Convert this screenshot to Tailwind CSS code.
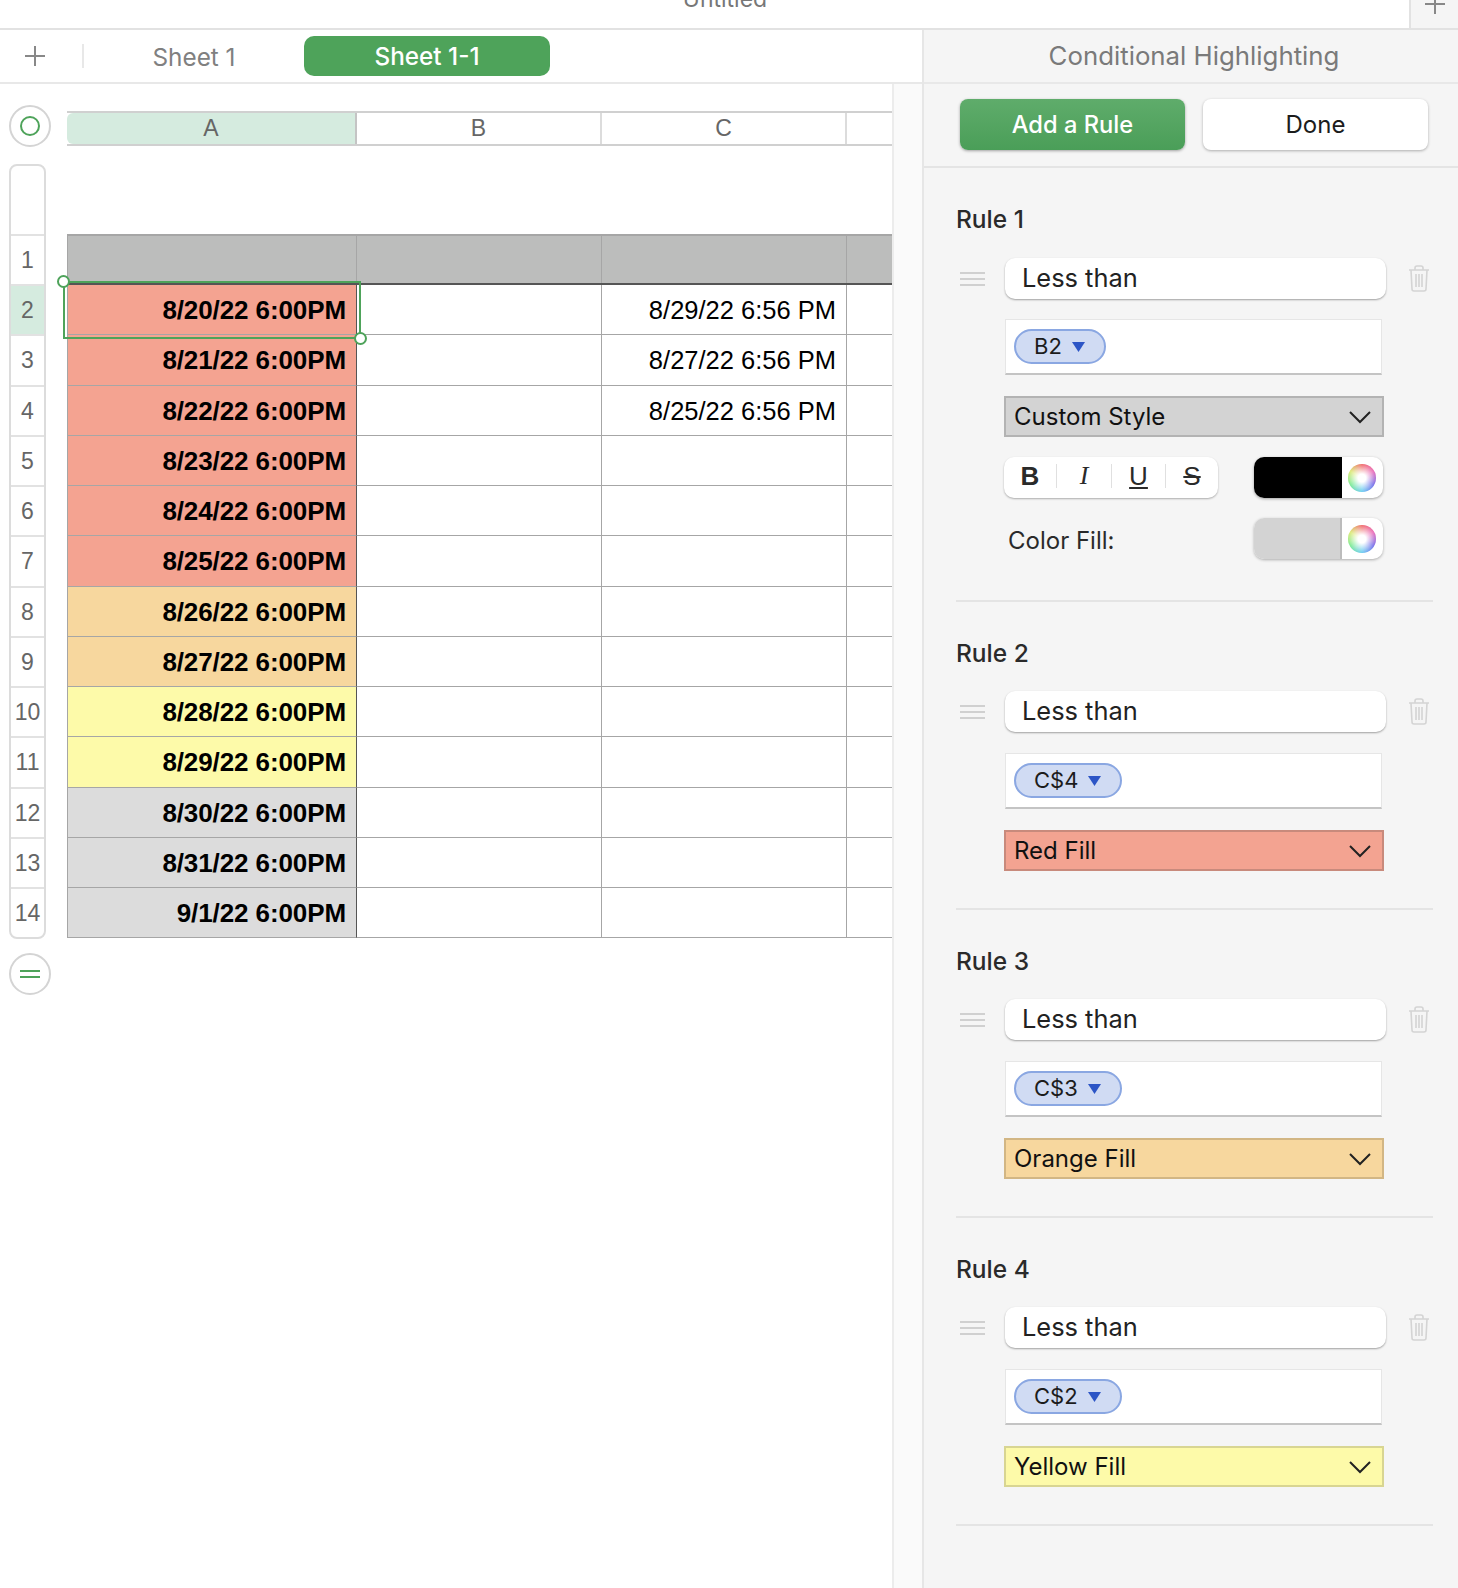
<!DOCTYPE html>
<html lang="en">
<head>
  <meta charset="UTF-8" />
  <title>Conditional Highlighting</title>
  <script src="https://cdn.jsdelivr.net/npm/@tailwindcss/browser@4"></script>
</head>
<body class="w-[1458px] h-[1588px] overflow-hidden bg-white font-['Inter',sans-serif] text-[#222]">
  <!-- Title bar -->
  <header class="flex h-[30px] border-b-2 border-[#e2e2e2] overflow-hidden">
    <div class="flex-1 flex justify-center items-end pl-[41px] pb-[15px] text-[23px] leading-[28px] text-[#777]">Untitled</div>
    <div class="w-[49px] bg-[#f5f5f5] border-l-2 border-[#e2e2e2] flex justify-center items-end pb-[14px]">
      <svg width="20" height="20" viewBox="0 0 20 20" class="text-[#888]"><path d="M10 0v20M0 10h20" stroke="currentColor" stroke-width="2"/></svg>
    </div>
  </header>

  <div class="flex h-[1558px]">
    <div class="w-[922px] flex flex-col">
      <!-- Sheet tabs -->
      <div class="h-[54px] shrink-0 border-b-2 border-[#e8e8e8] flex items-center">
        <div class="w-[69px] flex justify-center">
          <svg width="20" height="20" viewBox="0 0 20 20" class="text-[#888]"><path d="M10 0v20M0 10h20" stroke="currentColor" stroke-width="2"/></svg>
        </div>
        <div class="ml-[13px] w-[2px] h-[24px] bg-[#e8e8e8]"></div>
        <div class="w-[220px] pt-[2px] text-center text-[24.3px] text-[#808080]">Sheet 1</div>
        <div class="w-[246px] h-[40px] rounded-[10px] bg-[#4ea35a] text-white text-[24.3px] font-medium flex items-center justify-center">Sheet 1-1</div>
      </div>

      <div class="flex flex-1 min-h-0">
        <!-- Sheet canvas -->
        <div class="w-[892px] overflow-hidden pl-[9px]">
          <div class="flex items-start gap-[16px]">
            <div class="mt-[21px] w-[42px] h-[42px] rounded-full border-2 border-[#d4d4d4] bg-white flex items-center justify-center shrink-0">
              <div class="w-[20px] h-[20px] rounded-full border-2 border-[#4ea35a]"></div>
            </div>
            <div class="mt-[27px] h-[35px] flex border-y-2 border-y-[#d0d0d0] text-[23px] leading-[31px] text-[#666] font-['Liberation_Sans',sans-serif] shrink-0">
              <div class="w-[290px] text-center bg-[#d5ebdf] rounded-l-md border-r-2 border-[#c4c4c4]">A</div>
              <div class="w-[245px] text-center border-r-2 border-[#dcdcdc]">B</div>
              <div class="w-[245px] text-center border-r-2 border-[#dcdcdc]">C</div>
              <div class="w-[45px]"></div>
            </div>
          </div>

          <div class="flex mt-[17px]">
            <!-- Row numbers -->
            <div class="w-[37px] border-2 border-[#dcdcdc] rounded-lg overflow-hidden text-[23px] leading-[48px] text-center text-[#666] font-['Liberation_Sans',sans-serif] self-start shrink-0">
              <div class="h-[68px]"></div>
              <div class="h-[50px] border-t-2 border-[#e2e2e2]">1</div>
              <div class="h-[50.27px] border-t-2 border-[#e2e2e2] bg-[#d5ebdf]">2</div>
              <div class="h-[50.27px] border-t-2 border-[#e2e2e2]">3</div>
              <div class="h-[50.27px] border-t-2 border-[#e2e2e2]">4</div>
              <div class="h-[50.27px] border-t-2 border-[#e2e2e2]">5</div>
              <div class="h-[50.27px] border-t-2 border-[#e2e2e2]">6</div>
              <div class="h-[50.27px] border-t-2 border-[#e2e2e2]">7</div>
              <div class="h-[50.27px] border-t-2 border-[#e2e2e2]">8</div>
              <div class="h-[50.27px] border-t-2 border-[#e2e2e2]">9</div>
              <div class="h-[50.27px] border-t-2 border-[#e2e2e2]">10</div>
              <div class="h-[50.27px] border-t-2 border-[#e2e2e2]">11</div>
              <div class="h-[50.27px] border-t-2 border-[#e2e2e2]">12</div>
              <div class="h-[50.27px] border-t-2 border-[#e2e2e2]">13</div>
              <div class="h-[50.27px] border-t-2 border-[#e2e2e2]">14</div>
            </div>

            <!-- Table -->
            <div class="relative mt-[70px] ml-[21px] w-[825px] shrink-0 font-['Liberation_Sans',sans-serif] text-black">
              <div class="flex h-[51px] bg-[#bcbdbc] border-t-2 border-[#a6a6a6] border-b-2 border-b-[#555]">
                <div class="w-[290px] border-x border-[#a6a6a6]"></div>
                <div class="w-[245px] border-r border-[#a6a6a6]"></div>
                <div class="w-[245px] border-r border-[#a6a6a6]"></div>
              </div>
              <div class="grid grid-cols-[290px_245px_245px_45px] auto-rows-[50.27px] text-[25.5px] leading-[50px]">
                <div class="bg-[#f4a391] border-x border-r-[#555] border-l-[#a6a6a6] border-b border-b-[#a6a6a6] text-right pr-[10px] text-[26px] font-bold tracking-[-0.1px]">8/20/22 6:00PM</div>
                <div class="border-r border-b border-[#a6a6a6]"></div>
                <div class="border-r border-b border-[#a6a6a6] text-right pr-[10px]">8/29/22 6:56 PM</div>
                <div class="border-b border-[#a6a6a6]"></div>
                <div class="bg-[#f4a391] border-x border-r-[#555] border-l-[#a6a6a6] border-b border-b-[#a6a6a6] text-right pr-[10px] text-[26px] font-bold tracking-[-0.1px]">8/21/22 6:00PM</div>
                <div class="border-r border-b border-[#a6a6a6]"></div>
                <div class="border-r border-b border-[#a6a6a6] text-right pr-[10px]">8/27/22 6:56 PM</div>
                <div class="border-b border-[#a6a6a6]"></div>
                <div class="bg-[#f4a391] border-x border-r-[#555] border-l-[#a6a6a6] border-b border-b-[#a6a6a6] text-right pr-[10px] text-[26px] font-bold tracking-[-0.1px]">8/22/22 6:00PM</div>
                <div class="border-r border-b border-[#a6a6a6]"></div>
                <div class="border-r border-b border-[#a6a6a6] text-right pr-[10px]">8/25/22 6:56 PM</div>
                <div class="border-b border-[#a6a6a6]"></div>
                <div class="bg-[#f4a391] border-x border-r-[#555] border-l-[#a6a6a6] border-b border-b-[#a6a6a6] text-right pr-[10px] text-[26px] font-bold tracking-[-0.1px]">8/23/22 6:00PM</div>
                <div class="border-r border-b border-[#a6a6a6]"></div>
                <div class="border-r border-b border-[#a6a6a6]"></div>
                <div class="border-b border-[#a6a6a6]"></div>
                <div class="bg-[#f4a391] border-x border-r-[#555] border-l-[#a6a6a6] border-b border-b-[#a6a6a6] text-right pr-[10px] text-[26px] font-bold tracking-[-0.1px]">8/24/22 6:00PM</div>
                <div class="border-r border-b border-[#a6a6a6]"></div>
                <div class="border-r border-b border-[#a6a6a6]"></div>
                <div class="border-b border-[#a6a6a6]"></div>
                <div class="bg-[#f4a391] border-x border-r-[#555] border-l-[#a6a6a6] border-b border-b-[#a6a6a6] text-right pr-[10px] text-[26px] font-bold tracking-[-0.1px]">8/25/22 6:00PM</div>
                <div class="border-r border-b border-[#a6a6a6]"></div>
                <div class="border-r border-b border-[#a6a6a6]"></div>
                <div class="border-b border-[#a6a6a6]"></div>
                <div class="bg-[#f7d79e] border-x border-r-[#555] border-l-[#a6a6a6] border-b border-b-[#a6a6a6] text-right pr-[10px] text-[26px] font-bold tracking-[-0.1px]">8/26/22 6:00PM</div>
                <div class="border-r border-b border-[#a6a6a6]"></div>
                <div class="border-r border-b border-[#a6a6a6]"></div>
                <div class="border-b border-[#a6a6a6]"></div>
                <div class="bg-[#f7d79e] border-x border-r-[#555] border-l-[#a6a6a6] border-b border-b-[#a6a6a6] text-right pr-[10px] text-[26px] font-bold tracking-[-0.1px]">8/27/22 6:00PM</div>
                <div class="border-r border-b border-[#a6a6a6]"></div>
                <div class="border-r border-b border-[#a6a6a6]"></div>
                <div class="border-b border-[#a6a6a6]"></div>
                <div class="bg-[#fdfaa9] border-x border-r-[#555] border-l-[#a6a6a6] border-b border-b-[#a6a6a6] text-right pr-[10px] text-[26px] font-bold tracking-[-0.1px]">8/28/22 6:00PM</div>
                <div class="border-r border-b border-[#a6a6a6]"></div>
                <div class="border-r border-b border-[#a6a6a6]"></div>
                <div class="border-b border-[#a6a6a6]"></div>
                <div class="bg-[#fdfaa9] border-x border-r-[#555] border-l-[#a6a6a6] border-b border-b-[#a6a6a6] text-right pr-[10px] text-[26px] font-bold tracking-[-0.1px]">8/29/22 6:00PM</div>
                <div class="border-r border-b border-[#a6a6a6]"></div>
                <div class="border-r border-b border-[#a6a6a6]"></div>
                <div class="border-b border-[#a6a6a6]"></div>
                <div class="bg-[#dcdcdc] border-x border-r-[#555] border-l-[#a6a6a6] border-b border-b-[#a6a6a6] text-right pr-[10px] text-[26px] font-bold tracking-[-0.1px]">8/30/22 6:00PM</div>
                <div class="border-r border-b border-[#a6a6a6]"></div>
                <div class="border-r border-b border-[#a6a6a6]"></div>
                <div class="border-b border-[#a6a6a6]"></div>
                <div class="bg-[#dcdcdc] border-x border-r-[#555] border-l-[#a6a6a6] border-b border-b-[#a6a6a6] text-right pr-[10px] text-[26px] font-bold tracking-[-0.1px]">8/31/22 6:00PM</div>
                <div class="border-r border-b border-[#a6a6a6]"></div>
                <div class="border-r border-b border-[#a6a6a6]"></div>
                <div class="border-b border-[#a6a6a6]"></div>
                <div class="bg-[#dcdcdc] border-x border-r-[#555] border-l-[#a6a6a6] border-b border-b-[#a6a6a6] text-right pr-[10px] text-[26px] font-bold tracking-[-0.1px]">9/1/22 6:00PM</div>
                <div class="border-r border-b border-[#a6a6a6]"></div>
                <div class="border-r border-b border-[#a6a6a6]"></div>
                <div class="border-b border-[#a6a6a6]"></div>
              </div>
              <!-- Selection around A2 -->
              <div class="absolute left-[-4px] top-[47px] w-[298px] h-[58px] border-2 border-[#4ea35a]">
                <div class="absolute left-[-8px] top-[-8px] w-[13px] h-[13px] rounded-full bg-white border-2 border-[#4ea35a]"></div>
                <div class="absolute right-[-8px] bottom-[-8px] w-[13px] h-[13px] rounded-full bg-white border-2 border-[#4ea35a]"></div>
              </div>
            </div>
          </div>

          <div class="mt-[14px] w-[42px] h-[42px] rounded-full border-2 border-[#d4d4d4] bg-white flex flex-col items-center justify-center gap-[4px]">
            <div class="w-[20px] h-[2px] bg-[#4ea35a]"></div>
            <div class="w-[20px] h-[2px] bg-[#4ea35a]"></div>
          </div>
        </div>
        <div class="w-[30px] bg-[#fafafa] border-l-2 border-[#ececec]"></div>
      </div>
    </div>

    <!-- Inspector panel -->
    <aside class="w-[536px] bg-[#f5f5f5] border-l-2 border-[#e6e6e6] flex flex-col">
      <div class="h-[54px] shrink-0 border-b-2 border-[#e8e8e8] flex items-center justify-center text-[25.8px] text-[#7a7a7a] pl-[6px]">Conditional Highlighting</div>
      <div class="h-[84px] shrink-0 border-b-2 border-[#e4e4e4] flex gap-[18px] pl-[36px] pt-[15px]">
        <div class="w-[225px] h-[51px] rounded-lg bg-gradient-to-b from-[#5fac6b] to-[#4a9e58] shadow-[0_1px_3px_rgba(0,0,0,0.35)] text-white text-[23.7px] font-medium flex items-center justify-center">Add a Rule</div>
        <div class="w-[225px] h-[51px] rounded-lg bg-white shadow-[0_1px_3px_rgba(0,0,0,0.3)] text-[24px] text-[#1c1c1c] flex items-center justify-center">Done</div>
      </div>

      <div class="pl-[33px]">
        <!-- Rule 1 -->
        <section class="pt-[36px] w-[476px]">
          <h2 class="h-[32px] -ml-px text-[24.5px] leading-[30px] font-medium text-[#2a2a2a]">Rule 1</h2>
          <div class="mt-[22px] flex items-center">
            <div class="w-[48px] pl-[3px] flex flex-col gap-[4px]">
              <div class="w-[25px] h-[2px] bg-[#d0d0d0]"></div><div class="w-[25px] h-[2px] bg-[#d0d0d0]"></div><div class="w-[25px] h-[2px] bg-[#d0d0d0]"></div>
            </div>
            <div class="w-[381px] h-[41px] rounded-[10px] bg-white shadow-[0_1px_2px_rgba(0,0,0,0.35)] pl-[17px] text-[25.4px] leading-[39px]">Less than</div>
            <svg class="ml-[22px]" width="22" height="27" viewBox="0 0 22 27" fill="none" stroke="#d4d4d4" stroke-width="1.6"><path d="M1 5h20M7 5V3a2 2 0 0 1 2-2h4a2 2 0 0 1 2 2v2M3 5l1 19a2 2 0 0 0 2 2h10a2 2 0 0 0 2-2l1-19M8 9v13M11 9v13M14 9v13"/></svg>
          </div>
          <div class="mt-[20px] ml-[48px] w-[377px] h-[56px] bg-white border-t border-x border-[#e6e6e6] border-b-2 border-b-[#c4c4c4] pl-[8px] pt-[9px]">
            <div class="w-[92px] h-[35px] rounded-full bg-[#d0dbf3] border-2 border-[#8aa7e2] flex items-center pl-[18px] text-[22px] text-[#1c1c1c]">B2<svg class="ml-[10px]" width="13" height="10" viewBox="0 0 13 10"><path d="M0 0h13L6.500 10z" fill="#2c55c6"/></svg></div>
          </div>
          <div class="mt-[21px] ml-[47px] w-[380px] h-[41px] bg-[#d3d3d3] border-2 border-[#b3b3b3] flex items-center justify-between pl-[8px] pr-[11px] text-[24px] text-[#111]">Custom Style
            <svg width="22" height="14" viewBox="0 0 22 14" fill="none" stroke="#222" stroke-width="2"><path d="M1 2l10 10L21 2"/></svg>
          </div>
          <div class="mt-[20px] ml-[47px] w-[379px] flex justify-between">
            <div class="w-[214px] h-[41px] rounded-[10px] bg-white shadow-[0_1px_2px_rgba(0,0,0,0.3)] flex items-center pb-[3px] text-[26px] leading-[36px] text-[#2a2a2a]">
              <div class="w-[52px] text-center font-bold font-['Liberation_Sans',sans-serif]">B</div>
              <div class="w-px h-[24px] bg-[#e0e0e0]"></div>
              <div class="w-[54px] text-center italic font-['Liberation_Serif',serif]">I</div>
              <div class="w-px h-[24px] bg-[#e0e0e0]"></div>
              <div class="w-[53px] text-center underline font-['Liberation_Sans',sans-serif]">U</div>
              <div class="w-px h-[24px] bg-[#e0e0e0]"></div>
              <div class="w-[52px] text-center line-through font-['Liberation_Sans',sans-serif]">S</div>
            </div>
            <div class="w-[129px] h-[41px] rounded-[10px] bg-white shadow-[0_1px_3px_rgba(0,0,0,0.35)] overflow-hidden flex items-center">
              <div class="w-[88px] h-full bg-black"></div>
              <div class="ml-[6px] w-[28px] h-[28px] rounded-full bg-[conic-gradient(#ef5f5f,#e85fb4,#6a62e8,#5fc8f0,#6fe88a,#d8e86a,#ef5f5f)] flex items-center justify-center">
                <div class="w-full h-full rounded-full bg-[radial-gradient(circle,#fff_20%,rgba(255,255,255,0)_75%)]"></div>
              </div>
            </div>
          </div>
          <div class="mt-[20px] ml-[51px] w-[375px] flex items-center justify-between">
            <div class="text-[24px] text-[#2a2a2a] pt-[4px]">Color Fill:</div>
            <div class="w-[129px] h-[41px] rounded-[10px] bg-white shadow-[0_1px_3px_rgba(0,0,0,0.3)] overflow-hidden flex items-center">
              <div class="w-[88px] h-full bg-[#d3d3d3] border-r-2 border-[#bcbcbc]"></div>
              <div class="ml-[6px] w-[28px] h-[28px] rounded-full bg-[conic-gradient(#ef5f5f,#e85fb4,#6a62e8,#5fc8f0,#6fe88a,#d8e86a,#ef5f5f)]">
                <div class="w-full h-full rounded-full bg-[radial-gradient(circle,#fff_20%,rgba(255,255,255,0)_75%)]"></div>
              </div>
            </div>
          </div>
          <div class="mt-[41px] -ml-px h-[2px] bg-[#e4e4e4]"></div>
        </section>

        <!-- Rule 2 -->
        <section class="pt-[36px] w-[476px]">
          <h2 class="h-[32px] -ml-px text-[24.5px] leading-[30px] font-medium text-[#2a2a2a]">Rule 2</h2>
          <div class="mt-[21px] flex items-center">
            <div class="w-[48px] pl-[3px] flex flex-col gap-[4px]">
              <div class="w-[25px] h-[2px] bg-[#d0d0d0]"></div><div class="w-[25px] h-[2px] bg-[#d0d0d0]"></div><div class="w-[25px] h-[2px] bg-[#d0d0d0]"></div>
            </div>
            <div class="w-[381px] h-[41px] rounded-[10px] bg-white shadow-[0_1px_2px_rgba(0,0,0,0.35)] pl-[17px] text-[25.4px] leading-[39px]">Less than</div>
            <svg class="ml-[22px]" width="22" height="27" viewBox="0 0 22 27" fill="none" stroke="#d4d4d4" stroke-width="1.6"><path d="M1 5h20M7 5V3a2 2 0 0 1 2-2h4a2 2 0 0 1 2 2v2M3 5l1 19a2 2 0 0 0 2 2h10a2 2 0 0 0 2-2l1-19M8 9v13M11 9v13M14 9v13"/></svg>
          </div>
          <div class="mt-[21px] ml-[48px] w-[377px] h-[56px] bg-white border-t border-x border-[#e6e6e6] border-b-2 border-b-[#c4c4c4] pl-[8px] pt-[9px]">
            <div class="w-[108px] h-[35px] rounded-full bg-[#d0dbf3] border-2 border-[#8aa7e2] flex items-center pl-[18px] text-[22px] text-[#1c1c1c]">C$4<svg class="ml-[10px]" width="13" height="10" viewBox="0 0 13 10"><path d="M0 0h13L6.500 10z" fill="#2c55c6"/></svg></div>
          </div>
          <div class="mt-[21px] ml-[47px] w-[380px] h-[41px] bg-[#f3a391] border-2 border-[#c88a7c] flex items-center justify-between pl-[8px] pr-[11px] text-[24px] text-[#111]">Red Fill
            <svg width="22" height="14" viewBox="0 0 22 14" fill="none" stroke="#222" stroke-width="2"><path d="M1 2l10 10L21 2"/></svg>
          </div>
          <div class="mt-[37px] -ml-px h-[2px] bg-[#e4e4e4]"></div>
        </section>

        <!-- Rule 3 -->
        <section class="pt-[36px] w-[476px]">
          <h2 class="h-[32px] -ml-px text-[24.5px] leading-[30px] font-medium text-[#2a2a2a]">Rule 3</h2>
          <div class="mt-[21px] flex items-center">
            <div class="w-[48px] pl-[3px] flex flex-col gap-[4px]">
              <div class="w-[25px] h-[2px] bg-[#d0d0d0]"></div><div class="w-[25px] h-[2px] bg-[#d0d0d0]"></div><div class="w-[25px] h-[2px] bg-[#d0d0d0]"></div>
            </div>
            <div class="w-[381px] h-[41px] rounded-[10px] bg-white shadow-[0_1px_2px_rgba(0,0,0,0.35)] pl-[17px] text-[25.4px] leading-[39px]">Less than</div>
            <svg class="ml-[22px]" width="22" height="27" viewBox="0 0 22 27" fill="none" stroke="#d4d4d4" stroke-width="1.6"><path d="M1 5h20M7 5V3a2 2 0 0 1 2-2h4a2 2 0 0 1 2 2v2M3 5l1 19a2 2 0 0 0 2 2h10a2 2 0 0 0 2-2l1-19M8 9v13M11 9v13M14 9v13"/></svg>
          </div>
          <div class="mt-[21px] ml-[48px] w-[377px] h-[56px] bg-white border-t border-x border-[#e6e6e6] border-b-2 border-b-[#c4c4c4] pl-[8px] pt-[9px]">
            <div class="w-[108px] h-[35px] rounded-full bg-[#d0dbf3] border-2 border-[#8aa7e2] flex items-center pl-[18px] text-[22px] text-[#1c1c1c]">C$3<svg class="ml-[10px]" width="13" height="10" viewBox="0 0 13 10"><path d="M0 0h13L6.500 10z" fill="#2c55c6"/></svg></div>
          </div>
          <div class="mt-[21px] ml-[47px] w-[380px] h-[41px] bg-[#f7d79e] border-2 border-[#d2b684] flex items-center justify-between pl-[8px] pr-[11px] text-[24px] text-[#111]">Orange Fill
            <svg width="22" height="14" viewBox="0 0 22 14" fill="none" stroke="#222" stroke-width="2"><path d="M1 2l10 10L21 2"/></svg>
          </div>
          <div class="mt-[37px] -ml-px h-[2px] bg-[#e4e4e4]"></div>
        </section>

        <!-- Rule 4 -->
        <section class="pt-[36px] w-[476px]">
          <h2 class="h-[32px] -ml-px text-[24.5px] leading-[30px] font-medium text-[#2a2a2a]">Rule 4</h2>
          <div class="mt-[21px] flex items-center">
            <div class="w-[48px] pl-[3px] flex flex-col gap-[4px]">
              <div class="w-[25px] h-[2px] bg-[#d0d0d0]"></div><div class="w-[25px] h-[2px] bg-[#d0d0d0]"></div><div class="w-[25px] h-[2px] bg-[#d0d0d0]"></div>
            </div>
            <div class="w-[381px] h-[41px] rounded-[10px] bg-white shadow-[0_1px_2px_rgba(0,0,0,0.35)] pl-[17px] text-[25.4px] leading-[39px]">Less than</div>
            <svg class="ml-[22px]" width="22" height="27" viewBox="0 0 22 27" fill="none" stroke="#d4d4d4" stroke-width="1.6"><path d="M1 5h20M7 5V3a2 2 0 0 1 2-2h4a2 2 0 0 1 2 2v2M3 5l1 19a2 2 0 0 0 2 2h10a2 2 0 0 0 2-2l1-19M8 9v13M11 9v13M14 9v13"/></svg>
          </div>
          <div class="mt-[21px] ml-[48px] w-[377px] h-[56px] bg-white border-t border-x border-[#e6e6e6] border-b-2 border-b-[#c4c4c4] pl-[8px] pt-[9px]">
            <div class="w-[108px] h-[35px] rounded-full bg-[#d0dbf3] border-2 border-[#8aa7e2] flex items-center pl-[18px] text-[22px] text-[#1c1c1c]">C$2<svg class="ml-[10px]" width="13" height="10" viewBox="0 0 13 10"><path d="M0 0h13L6.500 10z" fill="#2c55c6"/></svg></div>
          </div>
          <div class="mt-[21px] ml-[47px] w-[380px] h-[41px] bg-[#fdfaa9] border-2 border-[#d8d592] flex items-center justify-between pl-[8px] pr-[11px] text-[24px] text-[#111]">Yellow Fill
            <svg width="22" height="14" viewBox="0 0 22 14" fill="none" stroke="#222" stroke-width="2"><path d="M1 2l10 10L21 2"/></svg>
          </div>
          <div class="mt-[37px] -ml-px h-[2px] bg-[#e4e4e4]"></div>
        </section>
      </div>
    </aside>
  </div>
</body>
</html>
